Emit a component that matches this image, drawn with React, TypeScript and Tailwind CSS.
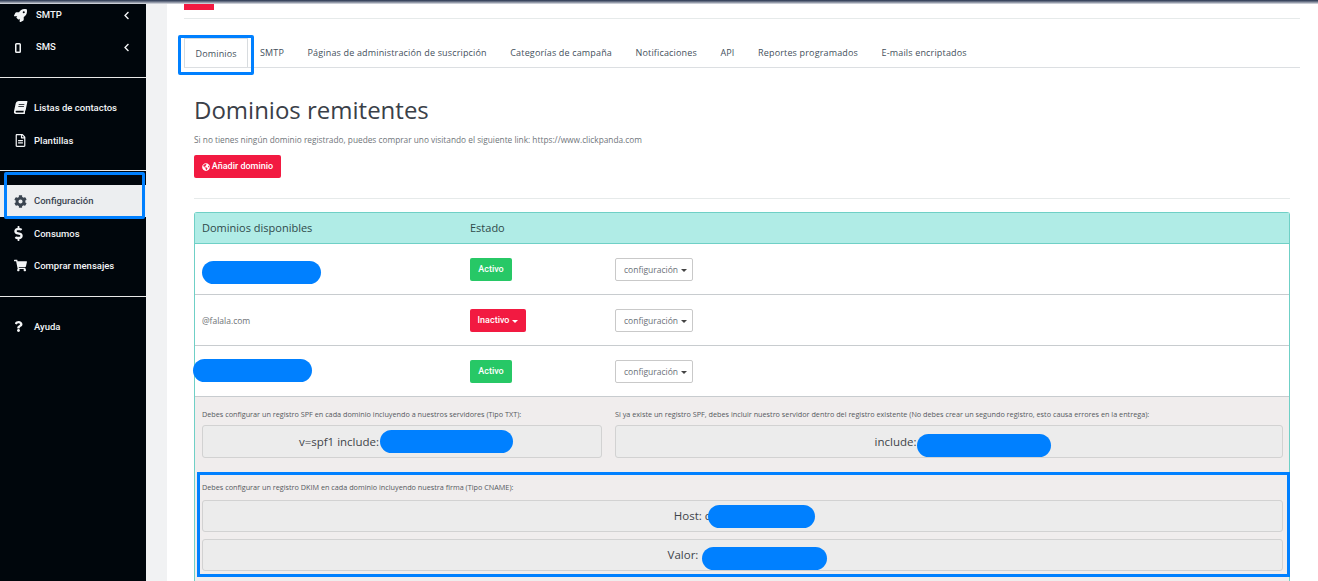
import { FaRocket, FaChevronLeft, FaBook, FaRegFileAlt, FaCog, FaDollarSign, FaShoppingCart, FaQuestion, FaGlobeAmericas } from "react-icons/fa";
import type { ReactNode } from "react";

const side = "font-['Roboto','Noto_Sans',sans-serif]";

function Nav({ icon, label, chevron, active, height, gap }: { icon: ReactNode; label: string; chevron?: boolean; active?: boolean; height: string; gap?: string }) {
  return (
    <div className={`flex items-center pl-[14px] text-[9.5px] font-medium ${height} ${active ? "bg-[#eceef0] text-[#3a4450]" : "text-[#f2f4f6]"}`}>
      <span className="flex w-[20px] justify-start text-[13px]">{icon}</span>
      <span className={`${gap ?? ""} ${active || chevron ? "" : "pt-[2px]"}`}>{label}</span>
      {chevron && <FaChevronLeft className="ml-auto mr-[15px] text-[9px]" />}
    </div>
  );
}

function Tab({ label, active }: { label: string; active?: boolean }) {
  return (
    <div className={`flex h-[29px] items-center pt-px text-[9px] tracking-[0.16px] text-[#44505c] ${active ? "w-[64px] border border-b-0 border-[#d8dcdf] bg-white pl-[10.5px]" : ""}`}>{label}</div>
  );
}

function Blob({ className }: { className: string }) {
  return <span className={`inline-block h-[23px] rounded-full bg-[#0080ff] ${className}`} />;
}

function Config() {
  return (
    <button className="flex h-[23px] w-[78px] items-center justify-center gap-[3px] rounded-[2px] border border-[#c9c9c9] bg-white pl-[3px] pt-[2px] text-[8.5px] text-[#6b7078]">
      configuración
      <span className="h-0 w-0 border-x-[3px] border-t-[3px] border-x-transparent border-t-[#444]" />
    </button>
  );
}

function Row({ name, status }: { name: ReactNode; status: ReactNode }) {
  return (
    <div className="flex h-[51px] items-center border-b border-[#c8cccf] pl-[7px]">
      <div className="w-[268px] pt-[2px] text-[8.5px] text-[#6e7276]">{name}</div>
      <div className="w-[145px]">{status}</div>
      <Config />
    </div>
  );
}

function Code({ children, className }: { children: ReactNode; className: string }) {
  return (
    <div className={`flex items-center justify-center rounded-[3px] border border-[#d2d2d2] bg-[#ececec] text-[11.5px] text-[#3e444a] ${className}`}>{children}</div>
  );
}

const activeBadge = (
  <span className={`flex h-[23px] w-[42px] items-center justify-center rounded-[2px] bg-[#27c866] pt-[2px] text-[9px] font-medium text-white ${side}`}>Activo</span>
);

export default function App() {
  return (
    <div className="relative flex h-[581px] w-[1318px] overflow-hidden bg-white font-['Open_Sans',sans-serif]">
      <div className="absolute inset-x-0 top-0 z-10 h-[4px] bg-gradient-to-b from-[#27344e] via-[#7a8294] to-[#e4e6ea]" />

      <aside className={`h-full w-[146px] shrink-0 bg-[#00060c] ${side}`}>
        <div className="pb-[13px]">
          <Nav height="h-[31px]" icon={<FaRocket />} label="SMTP" chevron gap="ml-[2px]" />
          <Nav height="h-[33px]" icon={
            <svg width="6" height="10" viewBox="0 0 6 10" className="ml-px mt-px"><rect x="0.75" y="0.75" width="4.5" height="8.5" rx="0.8" fill="none" stroke="currentColor" strokeWidth="1.5" /></svg>
          } label="SMS" chevron gap="ml-[2px]" />
        </div>
        <div className="h-px bg-[#e8e8e8]" />
        <div className="pt-[13px] pb-[13px]">
          <Nav height="h-[33px]" icon={<FaBook className="-skew-x-12" />} label="Listas de contactos" />
          <Nav height="h-[33px]" icon={<FaRegFileAlt />} label="Plantillas" />
        </div>
        <div className="h-px bg-[#e8e8e8]" />
        <div className="pt-[14px] pb-[15px]">
          <Nav height="h-[32px]" icon={<FaCog />} label="Configuración" active />
          <Nav height="h-[32px]" icon={<FaDollarSign className="-ml-[3px] text-[15px]" />} label="Consumos" />
          <Nav height="h-[32px]" icon={<FaShoppingCart />} label="Comprar mensajes" />
        </div>
        <div className="h-px bg-[#e8e8e8]" />
        <div className="pt-[13px]">
          <Nav height="h-[33px]" icon={<FaQuestion className="-ml-px text-[11px]" />} label="Ayuda" />
        </div>
      </aside>

      <div className="w-[21px] shrink-0 bg-[#f1f2f3]" />

      <main className="min-w-0 flex-1 pl-[17px] pr-[18px] pt-[3px]">
        <div className="h-[7px] w-[30px] bg-[#f21a41]" />
        <div className="mt-[8px] h-px bg-[#e6eaea]" />
        <nav className="mt-[19px] flex h-[30px] items-start gap-[23.5px] border-b border-[#dcdfe2]">
          <Tab label="Dominios" active />
          <div className="-ml-[11.5px] flex gap-[23.5px]">
            <Tab label="SMTP" />
            <Tab label="Páginas de administración de suscripción" />
            <Tab label="Categorías de campaña" />
            <Tab label="Notificaciones" />
            <Tab label="API" />
            <Tab label="Reportes programados" />
            <Tab label="E-mails encriptados" />
          </div>
        </nav>

        <div className="px-[10px]">
          <h1 className="mt-[25px] text-[24px] leading-[34px] text-[#3a4048]">Dominios remitentes</h1>
          <p className="mt-[7px] text-[8.3px] leading-[12px] text-[#70757a]">Si no tienes ningún dominio registrado, puedes comprar uno visitando el siguiente link: https://www.clickpanda.com</p>
          <button className={`mt-[9px] flex h-[23px] w-[87px] items-center justify-center gap-[2px] rounded-[2px] bg-[#f21a41] text-[9px] font-medium text-white ${side}`}>
            <FaGlobeAmericas className="text-[8px]" />
            Añadir dominio
          </button>
          <div className="mt-[20px] h-px bg-[#e6eaea]" />

          <section className="mt-[13px] h-[400px] rounded-t-[3px] border-x border-t border-[#6fd0c6]">
            <div className="flex h-[31px] items-center border-b border-[#6fd0c6] bg-[#b0ece6] pl-[7px] text-[11px] text-[#2f4a4a]">
              <span className="w-[268px]">Dominios disponibles</span>
              <span>Estado</span>
            </div>
            <Row name={<Blob className="mt-[8px] block w-[119px]" />} status={activeBadge} />
            <Row
              name="@falala.com"
              status={
                <span className={`flex h-[23px] w-[56px] items-center justify-center gap-[3px] rounded-[2px] bg-[#f21a41] pt-[2px] text-[9px] font-medium text-white ${side}`}>
                  Inactivo
                  <span className="h-0 w-0 border-x-[3px] border-t-[3px] border-x-transparent border-t-white" />
                </span>
              }
            />
            <Row name={<Blob className="-ml-[9px] block w-[119px]" />} status={activeBadge} />

            <div className="h-full bg-[#f0eded] pl-[7px] pr-[6px] pt-[12px]">
              <div className="flex gap-[13px]">
                <div className="w-[400px]">
                  <p className="text-[7.25px] leading-[10px] text-[#55595e]">Debes configurar un registro SPF en cada dominio incluyendo a nuestros servidores (Tipo TXT):</p>
                  <Code className="mt-[6px] h-[33px]">
                    <span className="flex translate-x-[4px] items-center">v=spf1 include:<Blob className="ml-[1px] w-[133px]" /></span>
                  </Code>
                </div>
                <div className="flex-1">
                  <p className="text-[7.25px] leading-[10px] text-[#55595e]">Si ya existe un registro SPF, debes incluir nuestro servidor dentro del registro existente (No debes crear un segundo registro, esto causa errores en la entrega):</p>
                  <Code className="mt-[6px] h-[33px]">
                    <span className="flex translate-x-[14px] items-center">include:<Blob className="ml-[1px] w-[134px] translate-y-[4px]" /></span>
                  </Code>
                </div>
              </div>
              <p className="mt-[24px] text-[7.25px] leading-[10px] text-[#55595e]">Debes configurar un registro DKIM en cada dominio incluyendo nuestra firma (Tipo CNAME):</p>
              <Code className="mt-[8px] h-[32px]">
                <span className="flex translate-x-[2px] items-center whitespace-pre">Host: c<Blob className="-ml-[2px] w-[107px]" /></span>
              </Code>
              <Code className="mt-[7px] h-[32px]">
                <span className="flex translate-x-[5px] items-center">Valor:<Blob className="ml-[4px] w-[125px] translate-y-[3px]" /></span>
              </Code>
            </div>
          </section>
        </div>
      </main>

      {/* Annotation frames drawn over the page */}
      <div className="absolute left-[4px] top-[172px] h-[47px] w-[141px] rounded-[2px] border-[3px] border-[#0080ff]" />
      <div className="absolute left-[178px] top-[35px] h-[40px] w-[76px] rounded-[2px] border-[3px] border-[#0080ff]" />
      <div className="absolute left-[197px] top-[472px] h-[105px] w-[1093px] border-[3px] border-[#0080ff]" />
    </div>
  );
}
